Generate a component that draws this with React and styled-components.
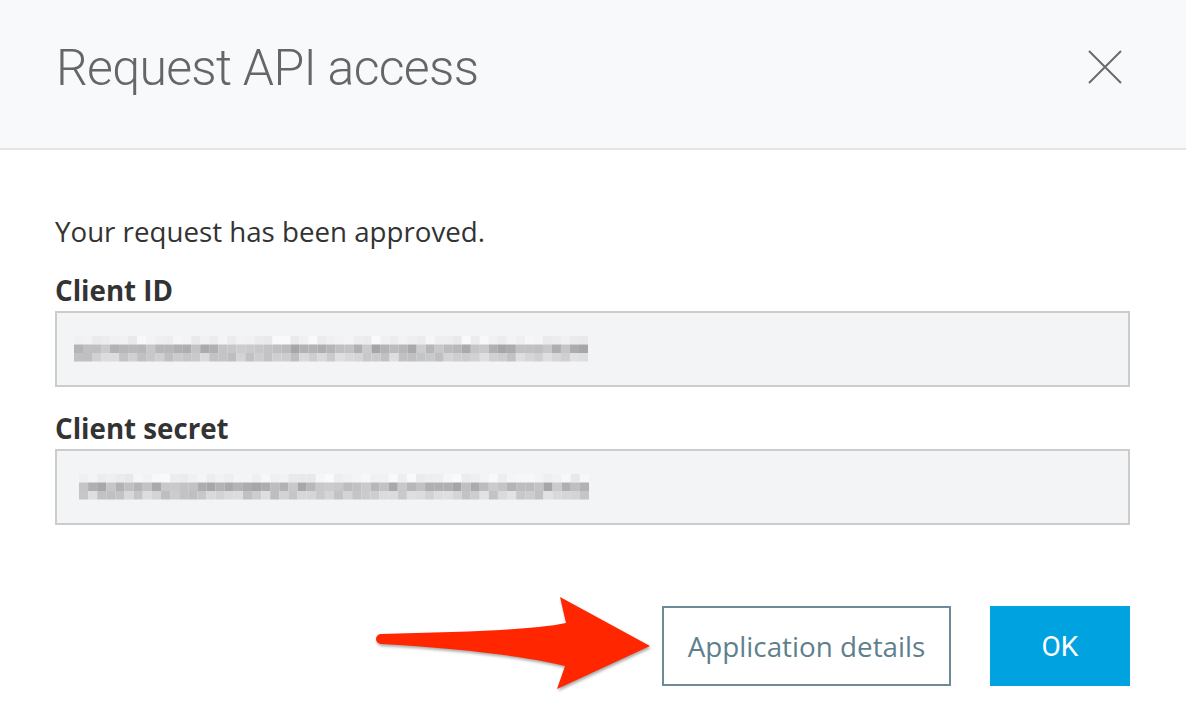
import React from "react";
import styled, { createGlobalStyle } from "styled-components";

const GlobalStyle = createGlobalStyle`
  html, body {
    margin: 0;
    padding: 0;
    background: #ffffff;
  }
  body {
    font-family: "Open Sans", "Liberation Sans", sans-serif;
    color: #333333;
  }
`;

// pseudo random so the blurred secret looks the same on every render
function makeRand(seed) {
  let s = seed;
  return () => {
    s = (s * 9301 + 49297) % 233280;
    return s / 233280;
  };
}

function BlurredText({ seed, cols, width }) {
  const rand = makeRand(seed);
  const rows = [
    [232, 250],
    [165, 205],
    [190, 226],
  ];
  const cells = [];
  for (let r = 0; r < rows.length; r++) {
    for (let c = 0; c < cols; c++) {
      const [lo, hi] = rows[r];
      const v = Math.round(lo + rand() * (hi - lo));
      cells.push(
        <rect
          key={r + "-" + c}
          x={c * 9}
          y={r * 8.5}
          width={9}
          height={8.5}
          fill={`rgb(${v},${v},${v + 2})`}
        />
      );
    }
  }
  return (
    <BlurSvg width={width} height={26} viewBox={`0 0 ${cols * 9} 26`} preserveAspectRatio="none">
      {cells}
    </BlurSvg>
  );
}

export default function App() {
  return (
    <>
      <GlobalStyle />
      <Dialog>
        <Header>
          <Title>Request API access</Title>
          <CloseButton aria-label="Close">
            <svg width="34" height="34" viewBox="0 0 34 34">
              <path d="M1 1 L33 33 M33 1 L1 33" stroke="#6b6b6b" strokeWidth="2" fill="none" />
            </svg>
          </CloseButton>
        </Header>
        <Body>
          <Message>Your request has been approved.</Message>
          <Field>
            <Label>Client ID</Label>
            <ValueBox pad={17}>
              <BlurredText seed={7} cols={57} width={514} />
            </ValueBox>
          </Field>
          <Field>
            <Label>Client secret</Label>
            <ValueBox pad={22}>
              <BlurredText seed={31} cols={56} width={510} />
            </ValueBox>
          </Field>
          <Actions>
            <ArrowAnchor>
              <Arrow width="282" height="100" viewBox="0 0 282 100">
                <path
                  d="M6 40 C 80 38, 160 36, 191 29 L 185 3 L 275 52 L 182 95 L 190 72 C 150 62, 80 54, 6 50 A 5 5 0 0 1 6 40 Z"
                  fill="#ff2600"
                />
              </Arrow>
              <SecondaryButton>Application details</SecondaryButton>
            </ArrowAnchor>
            <PrimaryButton>OK</PrimaryButton>
          </Actions>
        </Body>
      </Dialog>
    </>
  );
}

const Dialog = styled.div`
  width: 1186px;
  min-height: 722px;
  background: #fff;
`;

const Header = styled.div`
  height: 148px;
  background: #f8f9fb;
  border-bottom: 2px solid #e4e5e7;
  display: flex;
  align-items: center;
  justify-content: space-between;
  padding: 0 64px 0 56px;
  box-sizing: content-box;
`;

const Title = styled.h1`
  margin: 0;
  margin-top: -12px;
  font-family: "Roboto", "Liberation Sans", sans-serif;
  font-weight: 300;
  font-size: 50px;
  color: #666666;
  letter-spacing: -0.7px;
`;

const CloseButton = styled.button`
  width: 34px;
  height: 34px;
  padding: 0;
  margin-top: -14px;
  border: none;
  background: none;
  cursor: pointer;
  display: flex;
`;

const Body = styled.div`
  padding: 63px 56px 0 55px;
`;

const Message = styled.p`
  margin: 0 0 24px;
  font-size: 27.7px;
  line-height: 36px;
  color: #333;
`;

const Field = styled.div`
  & + & {
    margin-top: 24px;
  }
`;

const Label = styled.div`
  font-size: 27.7px;
  font-weight: 700;
  line-height: 34px;
  color: #333;
  margin-bottom: 4px;
`;

const ValueBox = styled.div`
  height: 72px;
  background: #f3f4f6;
  border: 2px solid #cccccc;
  display: flex;
  align-items: center;
  padding-left: ${(p) => p.pad}px;
`;

const BlurSvg = styled.svg`
  display: block;
`;

const Actions = styled.div`
  display: flex;
  justify-content: flex-end;
  gap: 39px;
  margin-top: 81px;
`;

const ArrowAnchor = styled.div`
  position: relative;
  display: flex;
`;

const Arrow = styled.svg`
  position: absolute;
  right: calc(100% + 5px);
  top: -12px;
  filter: drop-shadow(1px 2px 1.5px rgba(0, 0, 0, 0.35));
`;

const SecondaryButton = styled.button`
  width: 289px;
  height: 80px;
  border: 2px solid #6d8b97;
  background: #fff;
  color: #5f7f8d;
  font-family: "Open Sans", "Liberation Sans", sans-serif;
  font-size: 27.8px;
  cursor: pointer;
`;

const PrimaryButton = styled.button`
  width: 140px;
  height: 80px;
  border: none;
  background: #00a3e0;
  color: #fff;
  font-family: "Roboto", "Liberation Sans", sans-serif;
  font-size: 28px;
  cursor: pointer;
`;
